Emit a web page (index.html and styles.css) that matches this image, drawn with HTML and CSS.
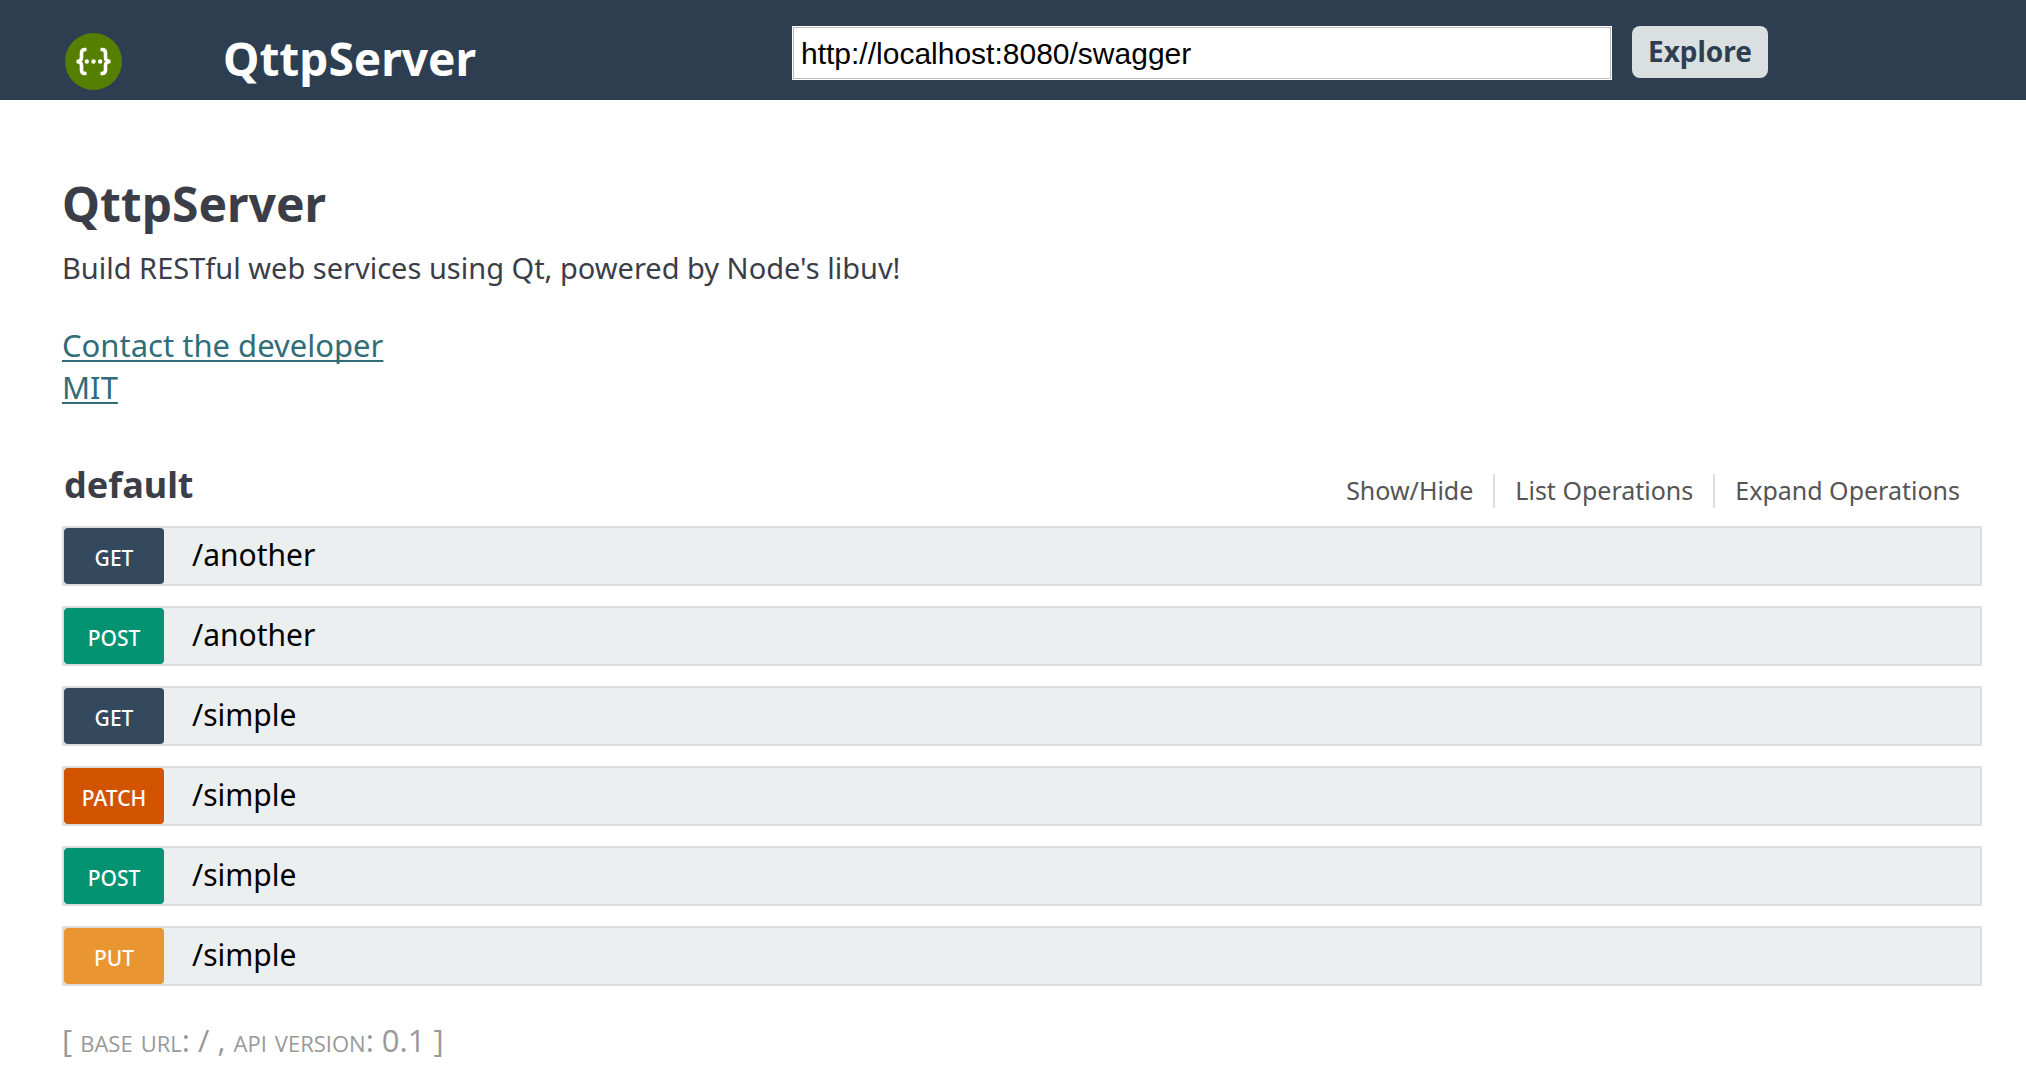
FILE: index.html
```
<!DOCTYPE html>
<html lang="en">
<head>
<meta charset="utf-8">
<title>QttpServer</title>
<link rel="stylesheet" href="styles.css">
</head>
<body>
<header class="topbar">
  <a class="brand" href="#">
    <svg class="logo" viewBox="0 0 58 58" aria-hidden="true">
      <circle cx="28.500" cy="29.500" r="28.500" fill="#547f00"/>
      <g fill="none" stroke="#fff" stroke-width="3.600">
        <path d="M21.500 17.500h-1.500q-3.500 0-3.500 3.500v4.500q0 4-5 4q5 0 5 4v4.500q0 3.500 3.500 3.500h1.500"/>
        <path d="M35.500 17.500h1.500q3.500 0 3.500 3.500v4.500q0 4 5 4q-5 0-5 4v4.500q0 3.500-3.500 3.500h-1.500"/>
      </g>
      <g fill="#fff"><circle cx="21.800" cy="29.500" r="2.200"/><circle cx="28.500" cy="29.500" r="2.200"/><circle cx="35.200" cy="29.500" r="2.200"/></g>
    </svg>
    <span class="brand-name">QttpServer</span>
  </a>
  <form class="search">
    <input class="url" type="text" aria-label="API URL" value="http://localhost:8080/swagger">
    <button class="explore" type="button">Explore</button>
  </form>
</header>
<main class="content">
  <h1 class="title">QttpServer</h1>
  <p class="description">Build RESTful web services using Qt, powered by Node's libuv!</p>
  <div class="info-links">
    <a href="#">Contact the developer</a>
    <a href="#">MIT</a>
  </div>
  <section>
    <div class="resource-head">
      <h2 class="resource-name">default</h2>
      <nav class="options">
        <a href="#">Show/Hide</a>
        <a href="#">List Operations</a>
        <a href="#">Expand Operations</a>
      </nav>
    </div>
    <ul class="endpoints">
      <li class="endpoint"><a class="method get" href="#">GET</a><a class="path" href="#">/another</a></li>
      <li class="endpoint"><a class="method post" href="#">POST</a><a class="path" href="#">/another</a></li>
      <li class="endpoint"><a class="method get" href="#">GET</a><a class="path" href="#">/simple</a></li>
      <li class="endpoint"><a class="method patch" href="#">PATCH</a><a class="path" href="#">/simple</a></li>
      <li class="endpoint"><a class="method post" href="#">POST</a><a class="path" href="#">/simple</a></li>
      <li class="endpoint"><a class="method put" href="#">PUT</a><a class="path" href="#">/simple</a></li>
    </ul>
  </section>
  <footer class="footer">[ <span class="caps">base url</span>: / , <span class="caps">api version</span>: 0.1 ]</footer>
</main>
</body>
</html>
```
FILE: styles.css
```
* { box-sizing: border-box; }

body {
  margin: 0;
  background: #fff;
  color: #3b3e48;
  font-family: "Noto Sans", "Open Sans", sans-serif;
}

.topbar {
  display: flex;
  align-items: flex-start;
  height: 100px;
  padding: 26px 258px 0 65px;
  background: #2d3e50;
}

.brand {
  display: flex;
  flex: 1;
  gap: 100px;
  color: #fff;
  text-decoration: none;
}

.logo { width: 58px; height: 58px; margin-top: 6px; }
.brand-name { font-size: 46px; font-weight: 700; line-height: 64px; }

.search { display: flex; flex: 0 0 976px; gap: 20px; }

.url {
  flex: 1;
  min-width: 0;
  height: 54px;
  padding: 2px 8px 0;
  border: 1px solid #fff;
  outline: 1px solid #bbb;
  outline-offset: -2px;
  background: #fff;
  color: #000;
  font-family: "Liberation Sans", Arial, sans-serif;
  font-size: 30px;
}

.explore {
  width: 136px;
  height: 52px;
  padding: 0 0 2px;
  border: 0;
  border-radius: 8px;
  background: #dadfe1;
  color: #2d3e50;
  font: 700 28px/50px "Noto Sans", sans-serif;
}

.content { padding: 68px 44px 0 62px; }

.title { margin: 0; font-size: 48px; line-height: 72px; }
.description { margin: 6px 0 0; font-size: 29px; line-height: 44px; }

.info-links {
  display: flex;
  flex-direction: column;
  align-items: flex-start;
  margin-top: 34px;
  font-size: 31px;
  line-height: 42px;
}
.info-links a { color: #316d79; text-underline-offset: 3px; text-decoration-thickness: 2px; text-decoration-skip-ink: none; }

.resource-head {
  display: flex;
  justify-content: space-between;
  margin-top: 54px;
  padding: 0 2px 0 2px;
}
.resource-name { margin: 0; font-size: 36px; line-height: 46px; }

.options { display: flex; padding-top: 12px; }
.options a {
  padding: 0 20px;
  border-right: 2px solid #ddd;
  color: #555;
  font-size: 25px;
  line-height: 32px;
  text-decoration: none;
}
.options a:last-child { border-right: 0; }

.endpoints {
  display: grid;
  gap: 20px;
  margin: 18px 0 0;
  padding: 0;
  list-style: none;
}
.endpoint {
  display: flex;
  gap: 28px;
  height: 60px;
  border: 2px solid #d8dee1;
  background: #ebeff0;
}
.method {
  width: 100px;
  border-radius: 4px;
  color: #fff;
  font-size: 21px;
  font-weight: 500;
  line-height: 60px;
  text-align: center;
  text-decoration: none;
}
.get { background: #34495e; }
.post { background: #049372; }
.patch { background: #d35400; }
.put { background: #e99532; }
.path { color: #000; font-size: 30px; line-height: 54px; text-decoration: none; }

.footer { margin-top: 32px; color: #999; font-family: "Open Sans", sans-serif; font-size: 31px; line-height: 44px; }
.caps { font-variant: small-caps; }
```
